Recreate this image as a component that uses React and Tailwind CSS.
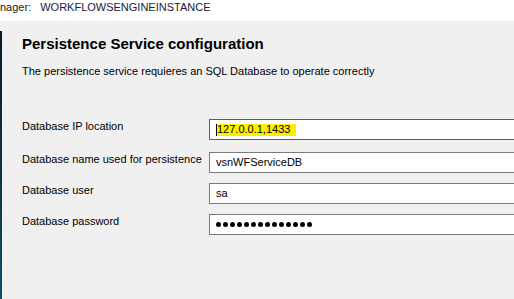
import React from "react";

function Field({ children, active, className = "" }) {
  return (
    <div
      className={
        "w-[330px] h-[21px] bg-white border flex items-center pl-[6px] " +
        (active ? "border-[#0078d7] " : "border-[#7a7a7a] ") +
        className
      }
    >
      {children}
    </div>
  );
}

function Row({ label, children, className = "" }) {
  return (
    <div className={"flex items-start " + className}>
      <div className="w-[187px] shrink-0 mt-[1px] text-[11px] leading-[13px] text-black">{label}</div>
      {children}
    </div>
  );
}

export default function App() {
  return (
    <div className="w-[514px] h-[299px] overflow-hidden bg-[#f0f0f0] flex flex-col font-['Liberation_Sans',Arial,sans-serif]">
      <div className="h-[21px] shrink-0 bg-white flex text-[11px] leading-[13px] pt-[1px]">
        <span className="text-[#202020]">nager:</span>
        <span className="ml-[9px] text-[#1a1a40]">WORKFLOWSENGINEINSTANCE</span>
      </div>
      <div className="flex flex-1 pt-[10px]">
        <div className="w-[2px] shrink-0 bg-linear-to-b from-[#0a1822] to-[#0c5068]" />
        <div className="pl-[20px] pt-[4px] flex flex-col">
          <h1 className="text-[15px] font-bold leading-[18px] text-black">
            Persistence Service configuration
          </h1>
          <p className="mt-[12px] text-[11px] leading-[13px] text-black">
            The persistence service requieres an SQL Database to operate correctly
          </p>
          <div className="mt-[41px] flex flex-col">
            <Row label="Database IP location">
              <Field active>
                <span className="flex items-center h-[12px] bg-[#ffee00] pr-[6px] text-[11px] leading-[13px] text-black">
                  <span className="w-[1px] h-[12px] bg-black" />
                  127.0.0.1,1433
                </span>
              </Field>
            </Row>
            <Row label="Database name used for persistence" className="mt-[12px]">
              <Field>
                <span className="text-[11px] leading-[13px] text-black">vsnWFServiceDB</span>
              </Field>
            </Row>
            <Row label="Database user" className="mt-[10px]">
              <Field>
                <span className="text-[11px] leading-[13px] text-black">sa</span>
              </Field>
            </Row>
            <Row label="Database password" className="mt-[10px]">
              <Field>
                <div className="flex gap-[2px]">
                  {Array.from({ length: 14 }).map((_, i) => (
                    <span key={i} className="w-[5px] h-[5px] rounded-full bg-black" />
                  ))}
                </div>
              </Field>
            </Row>
          </div>
        </div>
      </div>
    </div>
  );
}
